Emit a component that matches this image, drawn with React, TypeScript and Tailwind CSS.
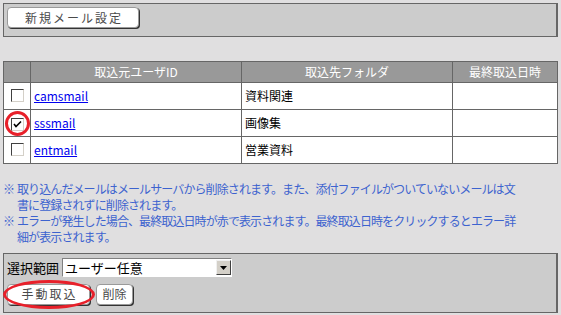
import * as React from 'react';

const font = { fontFamily: '"MS UI Gothic", "Noto Sans CJK JP", "Noto Sans", sans-serif' };

type Row = { id: string; folder: string; checked?: boolean };

const rows: Row[] = [
  { id: 'camsmail', folder: '資料関連' },
  { id: 'sssmail', folder: '画像集', checked: true },
  { id: 'entmail', folder: '営業資料' },
];

function Checkbox({ checked }: { checked?: boolean }) {
  return (
    <span className="inline-flex h-[13px] w-[13px] items-center justify-center border border-t-[#404040] border-l-[#404040] border-b-[#d4d0c8] border-r-[#d4d0c8] bg-white">
      {checked && (
        <svg width="9" height="9" viewBox="0 0 9 9">
          <path d="M1 4 L3 6.5 L8 1.5" stroke="#000" strokeWidth="1.6" fill="none" />
        </svg>
      )}
    </span>
  );
}

function Button({ children, className }: { children: React.ReactNode; className?: string }) {
  return (
    <span
      className={
        'inline-flex h-[21px] shrink-0 items-center justify-center rounded-[4px] border border-[#9a9a9a] bg-white text-[12px] text-[#4a4a4a] shadow-[1px_1px_0_#333] ' +
        (className ?? '')
      }
    >
      {children}
    </span>
  );
}

export default function App() {
  return (
    <div className="h-[315px] w-[561px] overflow-hidden bg-[#e0dfe0] p-[3px]" style={font}>
      {/* top toolbar */}
      <div className="flex h-[34px] w-[555px] items-start border border-[#666] border-r-2 bg-[#cccccc] p-[3px]">
        <Button className="pl-[17px] pr-[15px] tracking-[2px]">新規メール設定</Button>
      </div>

      <table className="mt-[24px] w-[555px] border-collapse border border-[#666] bg-white text-[12px]">
        <thead>
          <tr className="h-[21px] bg-[#999999] text-white">
            <th className="w-[27px] border border-[#666] font-normal"></th>
            <th className="w-[211px] border border-[#666] font-normal">取込元ユーザID</th>
            <th className="w-[211px] border border-[#666] font-normal">取込先フォルダ</th>
            <th className="border border-[#666] font-normal">最終取込日時</th>
          </tr>
        </thead>
        <tbody>
          {rows.map((r) => (
            <tr key={r.id} className="h-[27px]">
              <td className="relative border border-[#666] text-center">
                <span className="relative top-[1px] inline-flex">
                  <Checkbox checked={r.checked} />
                </span>
                {r.checked && (
                  <span className="absolute left-[1px] top-[1px] h-[25px] w-[25px] rounded-full border-[3px] border-[#e8202a]" />
                )}
              </td>
              <td className="border border-[#666] px-[3px]">
                <a href="#" className="text-[#0000ee] underline">
                  {r.id}
                </a>
              </td>
              <td className="border border-[#666] px-[3px] text-black">{r.folder}</td>
              <td className="border border-[#666]"></td>
            </tr>
          ))}
        </tbody>
      </table>

      {/* notes */}
      <div className="mt-[17px] text-[12px] leading-[16px] tracking-[-0.9px] text-[#3d63cf]">
        <div className="flex">
          <span className="w-[14px] shrink-0">※</span>
          <span>
            取り込んだメールはメールサーバから削除されます。また、添付ファイルがついていないメールは文
            <br />
            書に登録されずに削除されます。
          </span>
        </div>
        <div className="flex">
          <span className="w-[14px] shrink-0">※</span>
          <span>
            エラーが発生した場合、最終取込日時が赤で表示されます。最終取込日時をクリックするとエラー詳
            <br />
            細が表示されます。
          </span>
        </div>
      </div>

      {/* bottom panel */}
      <div className="mt-[8px] flex h-[60px] w-[555px] flex-col gap-[6px] border border-[#666] border-r-2 bg-[#cccccc] px-[3px] pt-[4px]">
        <div className="flex items-center gap-[3px] text-[13px] text-black">
          <span>選択範囲</span>
          <div className="flex h-[19px] w-[170px] items-center border border-t-[#808080] border-l-[#808080] border-b-white border-r-white bg-white">
            <span className="flex-1 pl-[2px] text-[13px] leading-none">ユーザー任意</span>
            <span className="flex h-[15px] w-[15px] items-center justify-center border border-t-[#f0f0f0] border-l-[#f0f0f0] border-b-[#404040] border-r-[#404040] bg-[#d4d0c8]">
              <svg width="7" height="4" viewBox="0 0 7 4">
                <path d="M0 0 H7 L3.5 4 Z" fill="#000" />
              </svg>
            </span>
          </div>
        </div>
        <div className="relative flex items-center gap-[6px]">
          <Button className="w-[83px] pl-[2px] tracking-[2px]">手動取込</Button>
          <Button className="w-[37px]">削除</Button>
          <span className="absolute left-[-4px] top-[-4px] h-[29px] w-[92px] rounded-[50%] border-[3px] border-[#e8202a]" />
        </div>
      </div>
    </div>
  );
}
